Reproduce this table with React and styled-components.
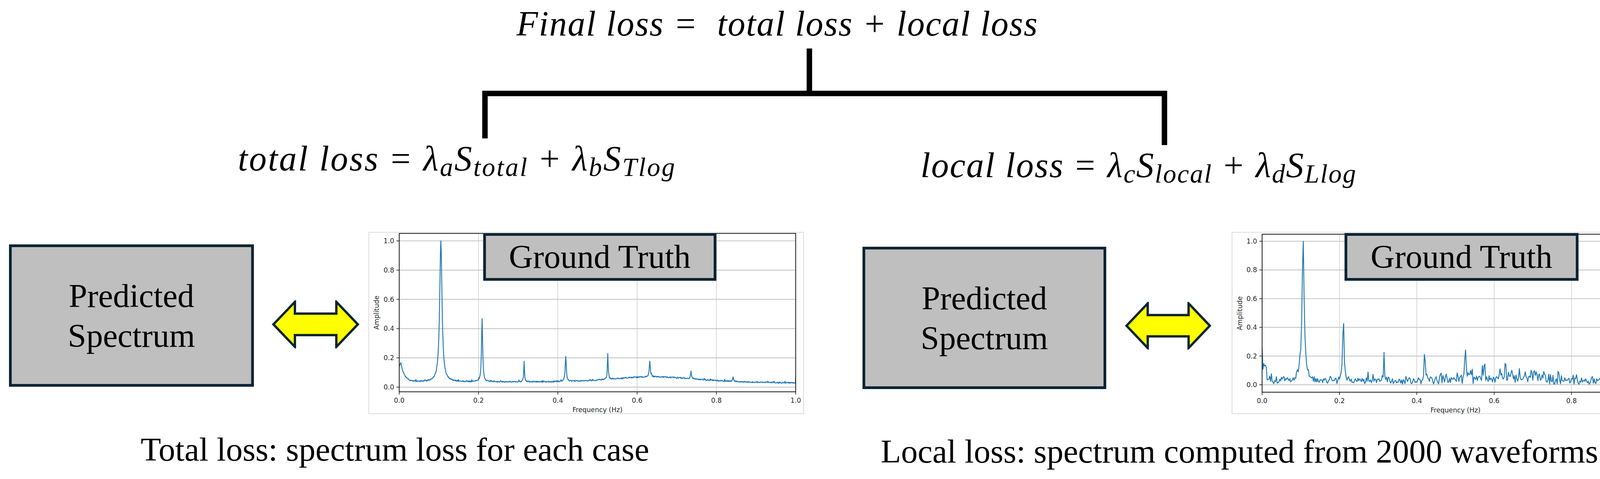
import React from "react";
import styled, { createGlobalStyle } from "styled-components";

const GlobalStyle = createGlobalStyle`
  html, body { margin: 0; padding: 0; background: #ffffff; }
  #root { width: 4255px; height: 1225px; overflow: hidden; }
`;

const NAVY = "#0c2433";

const Page = styled.div`
  width: 4255px;
  height: 1225px;
  background: #ffffff;
  color: #000000;
  font-family: "Liberation Serif", "Times New Roman", serif;
  overflow: hidden;
`;

const TitleLine = styled.div`
  width: 3980px;
  padding-top: 16px;
  height: 90px;
  font-style: italic;
  font-size: 90px;
  line-height: 1;
  letter-spacing: 2px;
  text-align: center;
  white-space: pre;
`;

const Connector = styled.svg`
  display: block;
  overflow: visible;
`;

const FormulaRow = styled.div`
  display: grid;
  grid-template-columns: 2340px 1150px;
  height: 246px;
  align-items: start;
`;

const Formula = styled.div`
  margin-top: ${(p) => p.$drop || 0}px;
  font-style: italic;
  font-size: 90px;
  line-height: 1.3;
  letter-spacing: ${(p) => p.$spacing || 3.5}px;
  text-align: center;
  white-space: nowrap;
`;

const Sub = styled.span`
  font-size: 0.75em;
  vertical-align: -0.2em;
`;

const Op = styled.span`
  font-style: normal;
  padding: 0 0.32em;
`;

const BottomRow = styled.div`
  display: flex;
  align-items: flex-start;
  padding-left: 23px;
`;

const Panel = styled.div`
  display: flex;
  flex-direction: column;
  margin-left: ${(p) => p.$gap || 0}px;
`;

const CompareRow = styled.div`
  display: flex;
  align-items: flex-start;
`;

const PredictedBox = styled.div`
  box-sizing: border-box;
  width: ${(p) => p.$w}px;
  height: ${(p) => p.$h}px;
  margin-top: ${(p) => p.$top}px;
  border: 7px solid ${NAVY};
  background: #bfbfbf;
  display: flex;
  align-items: center;
  justify-content: center;
  text-align: center;
  font-size: 85px;
  line-height: 1.2;
`;

const ArrowWrap = styled.div`
  margin-left: ${(p) => p.$left}px;
  margin-top: ${(p) => p.$top}px;
  line-height: 0;
`;

const ChartSlot = styled.div`
  margin-left: ${(p) => p.$left}px;
`;

const ChartFrame = styled.div`
  position: relative;
  width: ${(p) => p.$w}px;
  height: ${(p) => p.$h}px;
  line-height: 0;
`;

const GroundTruth = styled.div`
  position: absolute;
  left: ${(p) => p.$left}px;
  top: ${(p) => p.$top}px;
  box-sizing: border-box;
  width: ${(p) => p.$w}px;
  height: ${(p) => p.$h}px;
  border: 7px solid ${NAVY};
  background: #bfbfbf;
  display: flex;
  align-items: center;
  justify-content: center;
  font-size: 85px;
  line-height: 1.1;
  white-space: nowrap;
`;

const Caption = styled.div`
  width: ${(p) => p.$width}px;
  margin-top: ${(p) => p.$top}px;
  text-align: center;
  font-size: 85px;
  line-height: 1;
  white-space: nowrap;
`;

/* ---------- data ---------- */

function mulberry32(a) {
  return function () {
    a |= 0;
    a = (a + 0x6d2b79f5) | 0;
    let t = Math.imul(a ^ (a >>> 15), 1 | a);
    t = (t + Math.imul(t ^ (t >>> 7), 61 | t)) ^ t;
    return ((t ^ (t >>> 14)) >>> 0) / 4294967296;
  };
}

const lor = (x, x0, A, g) => A / (1 + ((x - x0) / g) ** 2);
const gau = (x, x0, A, s) => A * Math.exp(-(((x - x0) / s) ** 2));

function totalSpectrum() {
  const r = mulberry32(11);
  const N = 1000;
  const pts = [];
  const peaks = [
    [0.105, 0.96, 0.0035],
    [0.209, 0.43, 0.0017],
    [0.315, 0.14, 0.0011],
    [0.42, 0.17, 0.0017],
    [0.526, 0.18, 0.0011],
    [0.632, 0.11, 0.0015],
    [0.736, 0.045, 0.0015],
    [0.842, 0.03, 0.0013],
  ];
  for (let i = 0; i <= N; i++) {
    const x = i / N;
    let y =
      0.036 +
      gau(x, 0.64, 0.034, 0.14) -
      0.007 * Math.max(0, (x - 0.8) / 0.2) +
      0.13 * Math.exp(-Math.max(0, x - 0.004) / 0.009);
    for (const [x0, A, g] of peaks) y += lor(x, x0, A, g);
    y += (r() - 0.5) * 0.008;
    if (r() < 0.04) y += 0.012 * r();
    if (i < 4) y -= (4 - i) * 0.007;
    pts.push([x, y]);
  }
  pts[N][1] = 0.07;
  const m = Math.max(...pts.map((p) => p[1]));
  return pts.map(([x, y]) => [x, y / m]);
}

function localSpectrum() {
  const r = mulberry32(29);
  const N = 460;
  const pts = [];
  const peaks = [
    [0.106, 0.86, 0.003],
    [0.21, 0.42, 0.0018],
    [0.315, 0.19, 0.0011],
    [0.42, 0.18, 0.0015],
    [0.526, 0.19, 0.0011],
    [0.628, 0.11, 0.0015],
  ];
  for (let i = 0; i <= N; i++) {
    const x = i / N;
    const sigma = 0.021 + 0.021 * Math.exp(-(((x - 0.62) / 0.17) ** 2)) - 0.004 * Math.max(0, (x - 0.85) / 0.15);
    const u = Math.max(1e-6, r());
    let y = sigma * Math.sqrt(-2 * Math.log(u));
    y += gau(x, 0.105, 0.045, 0.013) + gau(x, 0.21, 0.03, 0.006);
    for (const [x0, A, g] of peaks) y += lor(x, x0, A, g);
    if (x < 0.013) y += 0.08;
    pts.push([x, Math.max(0.002, y)]);
  }
  pts[0][1] = 0.24;
  pts[1][1] = 0.1;
  pts[2][1] = 0.135;
  pts[3][1] = 0.12;
  pts[4][1] = 0.125;
  pts[N - 1][1] = 0.085;
  pts[N][1] = 0.015;
  const m = Math.max(...pts.map((p) => p[1]));
  return pts.map(([x, y]) => [x, y / m]);
}

const TOTAL = totalSpectrum();
const LOCAL = localSpectrum();

/* ---------- drawings ---------- */

const DoubleArrow = ({ w, h }) => {
  const sx = w / 224;
  const sy = h / 123;
  const pts = [
    [4, 61.5], [59, 4], [59, 34], [165, 34], [165, 4], [220, 61.5],
    [165, 119], [165, 89], [59, 89], [59, 119],
  ]
    .map(([x, y]) => `${x * sx},${y * sy}`)
    .join(" ");
  return (
    <svg width={w} height={h} viewBox={`0 0 ${w} ${h}`}>
      <polygon points={pts} fill="#ffff00" stroke={NAVY} strokeWidth="6" strokeLinejoin="miter" />
    </svg>
  );
};

const TICKS = [0, 0.2, 0.4, 0.6, 0.8, 1.0];

const Chart = ({ w, h, plot, ylim, data, gt }) => {
  const pw = w - plot.l - plot.r;
  const ph = h - plot.t - plot.b;
  const X = (v) => plot.l + v * pw;
  const Y = (v) => plot.t + ((ylim[1] - v) / (ylim[1] - ylim[0])) * ph;
  const d = data
    .map(([x, y], i) => `${i ? "L" : "M"}${X(x).toFixed(2)},${Y(y).toFixed(2)}`)
    .join("");
  const bottom = plot.t + ph;
  const labelStyle = { fontFamily: "'DejaVu Sans', sans-serif", fontSize: 17, fill: "#262626" };
  return (
    <ChartFrame $w={w} $h={h}>
      <svg width={w} height={h} viewBox={`0 0 ${w} ${h}`}>
        <rect x="1" y="1" width={w - 2} height={h - 2} fill="#ffffff" stroke="#dcdcdc" strokeWidth="2" />
        {TICKS.map((t) => (
          <line key={"gx" + t} x1={X(t)} x2={X(t)} y1={plot.t} y2={bottom} stroke="#cfcfcf" strokeWidth="1.6" />
        ))}
        {TICKS.map((t) => (
          <line key={"gy" + t} x1={plot.l} x2={plot.l + pw} y1={Y(t)} y2={Y(t)} stroke="#c6c6c6" strokeWidth="2.2" />
        ))}
        <path d={d} fill="none" stroke="#1f77b4" strokeWidth="2.3" strokeLinejoin="round" />
        <rect x={plot.l} y={plot.t} width={pw} height={ph} fill="none" stroke="#1a1a1a" strokeWidth="2" />
        {TICKS.map((t) => (
          <g key={"ty" + t}>
            <line x1={plot.l - 7} x2={plot.l} y1={Y(t)} y2={Y(t)} stroke="#1a1a1a" strokeWidth="1.6" />
            <text x={plot.l - 13} y={Y(t)} textAnchor="end" dominantBaseline="central" style={labelStyle}>
              {t.toFixed(1)}
            </text>
          </g>
        ))}
        {TICKS.map((t) => (
          <g key={"tx" + t}>
            <line x1={X(t)} x2={X(t)} y1={bottom} y2={bottom + 7} stroke="#1a1a1a" strokeWidth="1.6" />
            <text x={X(t)} y={bottom + 22} textAnchor="middle" dominantBaseline="central" style={labelStyle}>
              {t.toFixed(1)}
            </text>
          </g>
        ))}
        <text x={plot.l + pw / 2} y={bottom + 46} textAnchor="middle" dominantBaseline="central" style={labelStyle}>
          Frequency (Hz)
        </text>
        <text
          x={21}
          y={plot.t + ph / 2}
          textAnchor="middle"
          dominantBaseline="central"
          transform={`rotate(-90 21 ${plot.t + ph / 2})`}
          style={labelStyle}
        >
          Amplitude
        </text>
      </svg>
      <GroundTruth $left={gt.left} $top={gt.top} $w={gt.w} $h={gt.h}>
        Ground Truth
      </GroundTruth>
    </ChartFrame>
  );
};

const Bracket = () => (
  <Connector width="4255" height="241" viewBox="0 0 4255 241">
    <path d="M2072,18 V133" stroke="#000" strokeWidth="14" fill="none" />
    <path d="M1241.5,248 V133 H2981 V265" stroke="#000" strokeWidth="14" fill="none" strokeLinejoin="miter" />
  </Connector>
);

export default function App() {
  return (
    <>
      <GlobalStyle />
      <Page>
        <TitleLine>{"Final loss =  total loss + local loss"}</TitleLine>
        <Bracket />
        <FormulaRow>
          <Formula>
            total loss<Op>=</Op>λ<Sub>a</Sub>S<Sub>total</Sub>
            <Op>+</Op>λ<Sub>b</Sub>S<Sub>Tlog</Sub>
          </Formula>
          <Formula $drop={17} $spacing={2.5}>
            local loss<Op>=</Op>λ<Sub>c</Sub>S<Sub>local</Sub>
            <Op>+</Op>λ<Sub>d</Sub>S<Sub>Llog</Sub>
          </Formula>
        </FormulaRow>
        <BottomRow>
          <Panel>
            <CompareRow>
              <PredictedBox $w={627} $h={364} $top={32}>
                Predicted
                <br />
                Spectrum
              </PredictedBox>
              <ArrowWrap $left={46} $top={175}>
                <DoubleArrow w={224} h={123} />
              </ArrowWrap>
              <ChartSlot $left={23}>
                <Chart
                  w={1115}
                  h={466}
                  plot={{ l: 79, t: 4, r: 21, b: 57 }}
                  ylim={[-0.032, 1.0508]}
                  data={TOTAL}
                  gt={{ left: 294, top: 3, w: 597, h: 122 }}
                />
              </ChartSlot>
            </CompareRow>
            <Caption $width={1976} $top={48}>
              Total loss: spectrum loss for each case
            </Caption>
          </Panel>
          <Panel $gap={150}>
            <CompareRow>
              <PredictedBox $w={624} $h={364} $top={38}>
                Predicted
                <br />
                Spectrum
              </PredictedBox>
              <ArrowWrap $left={48} $top={179}>
                <DoubleArrow w={221} h={122} />
              </ArrowWrap>
              <ChartSlot $left={52}>
                <Chart
                  w={1089}
                  h={466}
                  plot={{ l: 78, t: 6, r: 21, b: 56 }}
                  ylim={[-0.052, 1.049]}
                  data={LOCAL}
                  gt={{ left: 289, top: 3, w: 599, h: 122 }}
                />
              </ChartSlot>
            </CompareRow>
            <Caption $width={1930} $top={53}>
              Local loss: spectrum computed from 2000 waveforms
            </Caption>
          </Panel>
        </BottomRow>
      </Page>
    </>
  );
}
